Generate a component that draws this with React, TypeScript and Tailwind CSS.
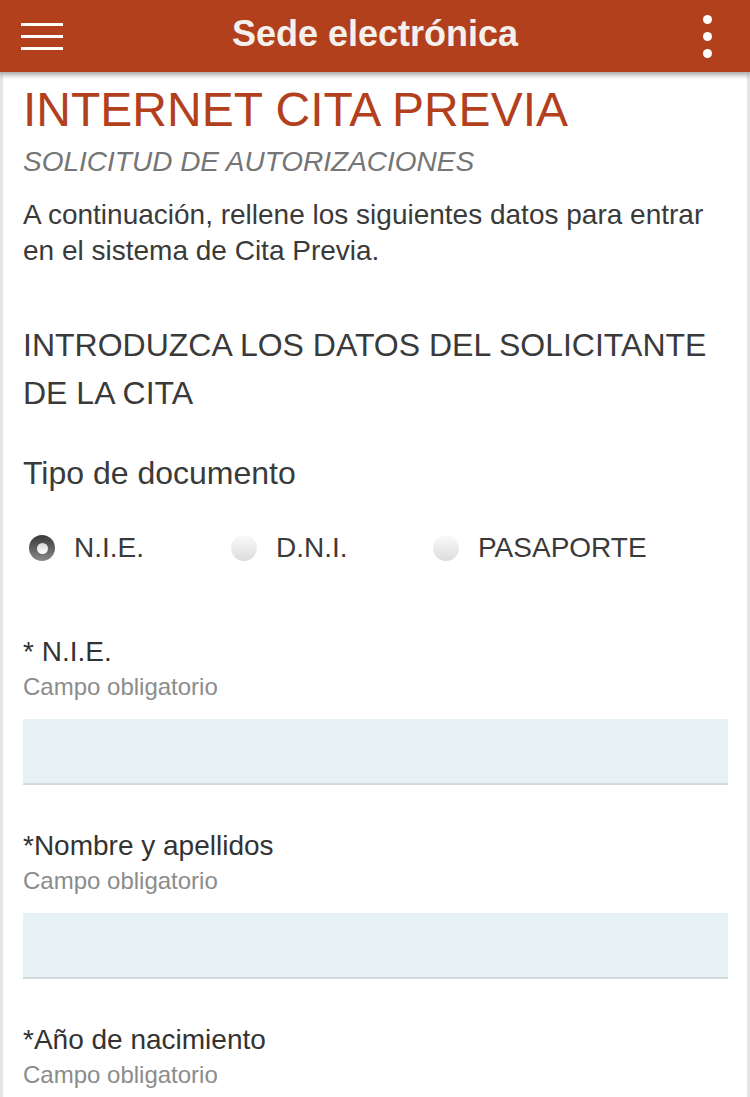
import { useState } from 'react'

type Doc = 'nie' | 'dni' | 'pas'

function Radio({ checked, label, onClick }: { checked: boolean; label: string; onClick: () => void }) {
  return (
    <button onClick={onClick} className="flex items-center gap-[19px] text-left">
      {checked ? (
        <span className="w-[26px] h-[26px] rounded-full bg-gradient-to-b from-[#3a3a3a] to-[#8a8a8a] flex items-center justify-center">
          <span className="w-[11px] h-[11px] rounded-full bg-gradient-to-b from-[#d8d8d8] to-white" />
        </span>
      ) : (
        <span className="w-[26px] h-[26px] rounded-full bg-gradient-to-b from-[#fbfbfb] to-[#dcdcdc]" />
      )}
      <span className="text-[28px] leading-[32px] text-[#3a3a3a]">{label}</span>
    </button>
  )
}

function Field({ label }: { label: string }) {
  return (
    <div className="flex flex-col">
      <div className="text-[28px] leading-[32px] text-[#333]">{label}</div>
      <div className="text-[24px] leading-[28px] text-[#8c8c8c] mt-[5px]">Campo obligatorio</div>
      <input className="mt-[18px] h-[66px] bg-[#e6f1f3] border-b-2 border-[#d3dadb] outline-none px-3 text-[26px]" />
    </div>
  )
}

function App() {
  const [doc, setDoc] = useState<Doc>('nie')

  return (
    <div className="min-h-screen bg-white" style={{ fontFamily: '"Liberation Sans", Arial, sans-serif' }}>
      <header className="relative z-10 h-[72px] bg-[#b3401d] grid grid-cols-[90px_1fr_90px] items-center shadow-[0_3px_5px_rgba(0,0,0,0.35)]">
        <div className="pl-[21px] flex flex-col gap-[9px]">
          <span className="block w-[42px] h-[3px] bg-white" />
          <span className="block w-[42px] h-[3px] bg-white" />
          <span className="block w-[42px] h-[3px] bg-white" />
        </div>
        <h1 className="text-center text-[36px] leading-[40px] font-bold text-[#f4f0ed] -mt-[4px]">Sede electrónica</h1>
        <div className="pr-[38px] flex flex-col items-end gap-[8px]">
          <span className="block w-[9px] h-[9px] rounded-full bg-white" />
          <span className="block w-[9px] h-[9px] rounded-full bg-white" />
          <span className="block w-[9px] h-[9px] rounded-full bg-white" />
        </div>
      </header>

      <main className="border-x-[3px] border-[#e4e4e4] pl-[20px] pr-[19px] pb-10 min-h-[1025px]">
        <h2 className="pt-[10px] text-[48px] leading-[56px] text-[#b3401d]">INTERNET CITA PREVIA</h2>
        <p className="mt-[8px] text-[28px] leading-[32px] italic text-[#757575]">SOLICITUD DE AUTORIZACIONES</p>
        <p className="mt-[19px] text-[28px] leading-[36px] text-[#3a3a3a]">
          A continuación, rellene los siguientes datos para entrar en el sistema de Cita Previa.
        </p>

        <h3 className="mt-[52px] text-[32px] leading-[48px] text-[#3a3a3a]">
          INTRODUZCA LOS DATOS DEL SOLICITANTE DE LA CITA
        </h3>

        <div className="mt-[36px] text-[32px] leading-[40px] text-[#3a3a3a]">Tipo de documento</div>

        <div className="mt-[39px] h-[32px] flex items-center pl-[6px]">
          <div className="w-[202px]">
            <Radio checked={doc === 'nie'} label="N.I.E." onClick={() => setDoc('nie')} />
          </div>
          <div className="w-[202px]">
            <Radio checked={doc === 'dni'} label="D.N.I." onClick={() => setDoc('dni')} />
          </div>
          <Radio checked={doc === 'pas'} label="PASAPORTE" onClick={() => setDoc('pas')} />
        </div>

        <div className="mt-[72px] flex flex-col gap-[45px]">
          <Field label="* N.I.E." />
          <Field label="*Nombre y apellidos" />
          <Field label="*Año de nacimiento" />
        </div>
      </main>
    </div>
  )
}

export default App
